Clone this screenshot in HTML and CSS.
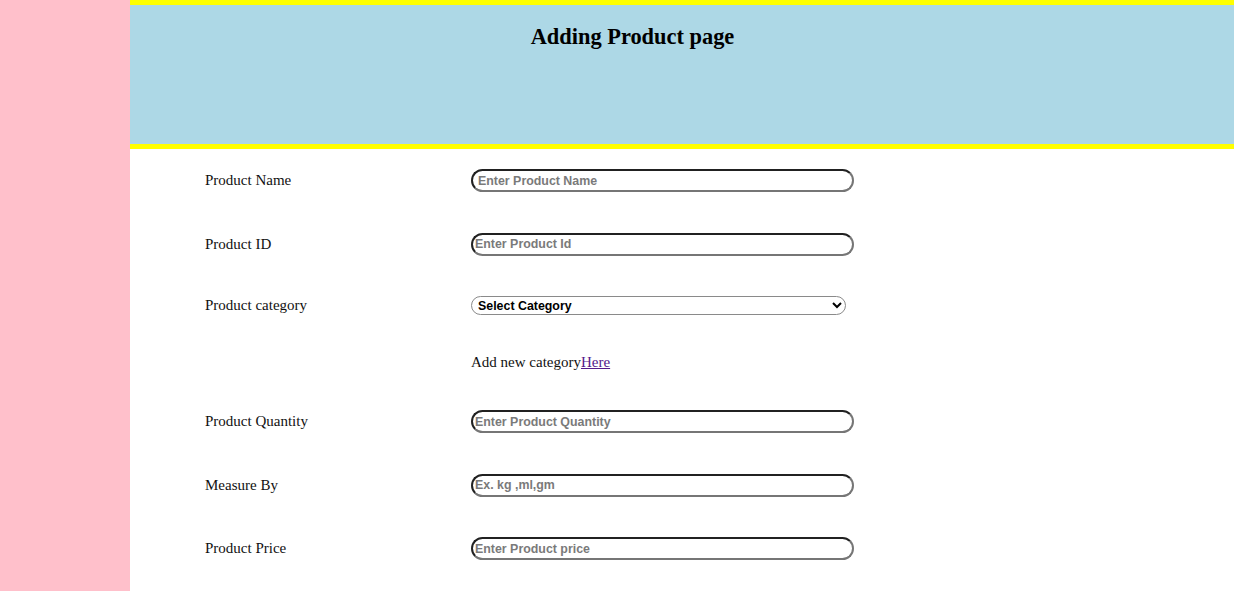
FILE: index.html
```html
<!DOCTYPE html>
<html>
<head>
<meta charset="utf-8">
<link rel="stylesheet" href="styles.css">
</head>
<body>
<div class="page">
  <aside class="sidebar"></aside>
  <main class="main">
    <header class="header">
      <h2 class="title">Adding Product page</h2>
    </header>
    <form class="form">
      <div class="row">
        <label class="label">Product Name</label>
        <input class="field field-first" type="text" placeholder="Enter Product Name">
      </div>
      <div class="row">
        <label class="label">Product ID</label>
        <input class="field" type="text" placeholder="Enter Product Id">
      </div>
      <div class="row row-select">
        <label class="label">Product category</label>
        <select class="select"><option>Select Category</option></select>
      </div>
      <div class="row row-link">
        <span class="label"></span>
        <span class="addnew">Add new category<a class="link" href="#">Here</a></span>
      </div>
      <div class="row">
        <label class="label">Product Quantity</label>
        <input class="field" type="text" placeholder="Enter Product Quantity">
      </div>
      <div class="row">
        <label class="label">Measure By</label>
        <input class="field" type="text" placeholder="Ex. kg ,ml,gm">
      </div>
      <div class="row">
        <label class="label">Product Price</label>
        <input class="field" type="text" placeholder="Enter Product price">
      </div>
    </form>
  </main>
</div>
</body>
</html>
```
FILE: styles.css
```css
html, body {
  margin: 0;
  padding: 0;
  background: #ffffff;
  font-family: "Liberation Serif", "Times New Roman", serif;
}
.page {
  display: flex;
  min-height: 100vh;
}
.sidebar {
  width: 130px;
  flex: 0 0 130px;
  background: #ffc0cb;
}
.main {
  flex: 1;
  min-width: 0;
}
.header {
  height: 139px;
  background: #add8e6;
  border-top: 5px solid #ffff00;
  border-bottom: 5px solid #ffff00;
  text-align: center;
  padding-right: 99px;
}
.title {
  margin: 0;
  padding-top: 19px;
  font-size: 22.4px;
  font-weight: bold;
  color: #000;
}
.form {
  display: flex;
  flex-direction: column;
  gap: 40.5px;
  padding: 20px 0 40px 75px;
}
.row {
  display: flex;
  align-items: center;
  height: 23px;
}
.row-select {
  height: 19px;
}
.row-link {
  height: 16px;
  margin-top: -2px;
  line-height: 16px;
}
.label {
  width: 266px;
  flex: 0 0 266px;
  font-size: 15px;
  color: #111;
}
.field {
  box-sizing: border-box;
  width: 383px;
  height: 23px;
  margin: 0;
  padding: 1px 2px;
  border: 2px inset #767676;
  border-radius: 12px;
  font-family: "Liberation Sans", Arial, sans-serif;
  font-size: 12.4px;
  font-weight: bold;
  background: #fff;
  outline: none;
}
.field-first {
  padding-left: 5px;
}
.field::placeholder {
  color: #7a7a7a;
  font-weight: bold;
}
.select {
  box-sizing: border-box;
  width: 375px;
  height: 19px;
  margin: 0;
  padding: 0 2px;
  border: 1px solid #8a8a8a;
  border-radius: 10px;
  font-family: "Liberation Sans", Arial, sans-serif;
  font-size: 12.4px;
  font-weight: bold;
  color: #000;
  background: #fff;
}
.addnew {
  font-size: 15px;
  color: #111;
}
.link {
  color: #551a8b;
  text-decoration: underline;
}
```
